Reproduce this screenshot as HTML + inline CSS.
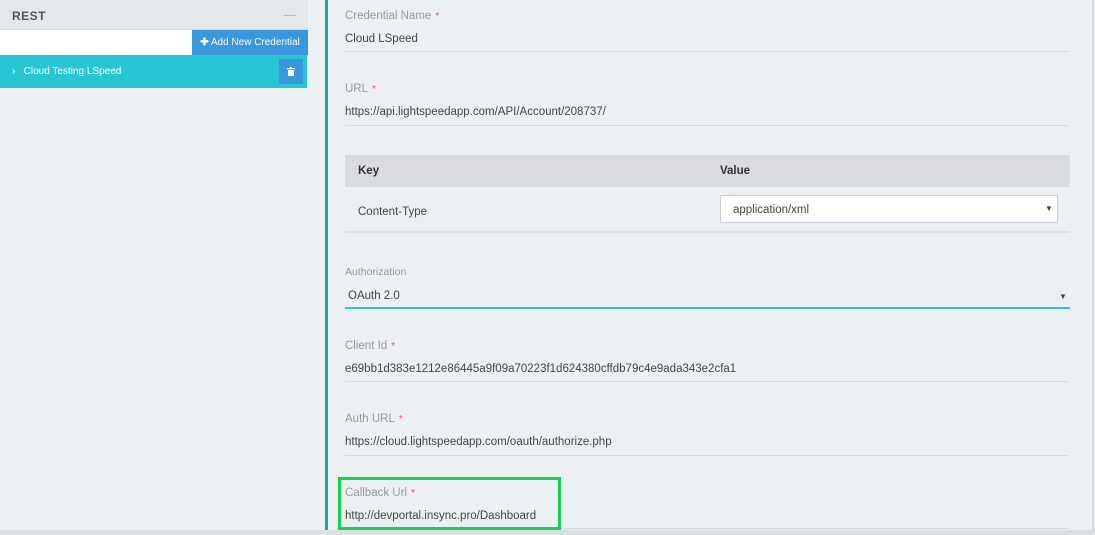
<!DOCTYPE html>
<html><head><style>
*{margin:0;padding:0;box-sizing:border-box}
body{width:1095px;height:535px;overflow:hidden;background:#edf0f3;font-family:"Liberation Sans",sans-serif;position:relative;color:#333}
.a{position:absolute}
.lbl{font-size:11.5px;color:#999;margin-top:1px}
.lbl b{color:#e55;font-weight:normal;margin-left:4px;font-size:10px}
.val{font-size:11.5px;color:#444;margin-top:1px}
.line{height:1px;background:#d8dce0;width:724px;left:345px}
</style></head><body>
<div class="a" style="left:0;top:0;width:308px;height:30px;background:#e5e8ea;border-bottom:1px solid #dadde0"></div>
<div class="a" style="left:12px;top:9px;font-size:12px;font-weight:bold;color:#555;letter-spacing:.5px">REST</div>
<div class="a" style="left:284px;top:15px;width:12px;height:1px;background:#bbb"></div>
<div class="a" style="left:0;top:30px;width:192px;height:25px;background:#fff"></div>
<div class="a" style="left:192px;top:30px;width:116px;height:25px;background:#3a96dd;color:#fff;font-size:10px;line-height:25px;text-align:center"><b>✚</b> Add New Credential</div>
<div class="a" style="left:0;top:55px;width:308px;height:33px;background:#28c6d5;border-right:1px solid #dde"></div>
<div class="a" style="left:12px;top:66px;color:#fff;font-size:10px">›&nbsp;&nbsp;&nbsp;Cloud Testing LSpeed</div>
<div class="a" style="left:279px;top:59px;width:24px;height:25px;background:#3a96dd"></div>
<svg class="a" style="left:287px;top:67px" width="8" height="9" viewBox="0 0 8 9"><rect x="0" y="1" width="8" height="1.3" fill="#fff"/><rect x="3" y="0" width="2" height="1" fill="#fff"/><rect x="1" y="3" width="6" height="6" fill="#fff"/></svg>
<div class="a" style="left:325px;top:0;width:3px;height:535px;background:#1aa3ad"></div>
<div class="a" style="left:1092px;top:0;width:2px;height:535px;background:#d5d8db"></div>
<div class="a" style="left:0;top:530px;width:1095px;height:5px;background:#dcdfe2"></div>

<div class="a lbl" style="left:345px;top:9px">Credential Name<b>*</b></div>
<div class="a val" style="left:345px;top:32px">Cloud LSpeed</div>
<div class="a line" style="top:51px"></div>
<div class="a lbl" style="left:345px;top:82px">URL<b>*</b></div>
<div class="a val" style="left:345px;top:105px">https://api.lightspeedapp.com/API/Account/208737/</div>
<div class="a line" style="top:125px"></div>

<div class="a" style="left:345px;top:155px;width:725px;height:32px;background:#d9dbde"></div>
<div class="a" style="left:358px;top:165px;font-size:11.5px;font-weight:bold;color:#333">Key</div>
<div class="a" style="left:720px;top:165px;font-size:11.5px;font-weight:bold;color:#333">Value</div>
<div class="a val" style="left:358px;top:205px">Content-Type</div>
<div class="a" style="left:720px;top:195px;width:338px;height:28px;background:#fff;border:1px solid #ccd"></div>
<div class="a val" style="left:733px;top:203px">application/xml</div>
<div class="a" style="left:1045px;top:204px;font-size:8px;color:#444">▼</div>
<div class="a" style="left:345px;top:231px;width:725px;height:2px;background:#dfe2e5"></div>

<div class="a lbl" style="left:345px;top:265px;font-size:10.5px">Authorization</div>
<div class="a val" style="left:348px;top:289px">OAuth 2.0</div>
<div class="a" style="left:1059px;top:292px;font-size:8px;color:#444">▼</div>
<div class="a" style="left:345px;top:307px;width:725px;height:2px;background:#2ec5d3"></div>

<div class="a lbl" style="left:345px;top:339px">Client Id<b>*</b></div>
<div class="a val" style="left:345px;top:362px">e69bb1d383e1212e86445a9f09a70223f1d624380cffdb79c4e9ada343e2cfa1</div>
<div class="a line" style="top:381px"></div>
<div class="a lbl" style="left:345px;top:412px">Auth URL<b>*</b></div>
<div class="a val" style="left:345px;top:435px">https://cloud.lightspeedapp.com/oauth/authorize.php</div>
<div class="a line" style="top:455px"></div>
<div class="a lbl" style="left:345px;top:486px">Callback Url<b>*</b></div>
<div class="a val" style="left:345px;top:509px">http://devportal.insync.pro/Dashboard</div>
<div class="a line" style="top:528px"></div>
<div class="a" style="left:338px;top:477px;width:223px;height:53px;border:3px solid #14d24a"></div>
</body></html>
